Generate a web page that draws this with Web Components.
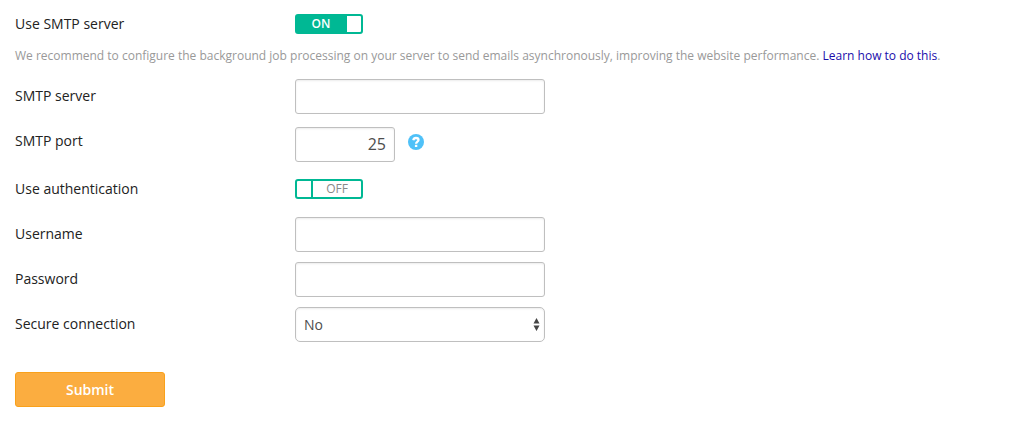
<!DOCTYPE html>
<html lang="en">
<head>
<meta charset="utf-8">
<title>SMTP settings</title>
<style>
  body { margin: 0; padding: 7px 15px 24px; background: #fff; color: #222; font: 14px/20px "Open Sans", sans-serif; }
</style>
</head>
<body>
<smtp-settings>
  <toggle-field label="Use SMTP server" checked></toggle-field>
  <hint-text>We recommend to configure the background job processing on your server to send emails asynchronously, improving the website performance. <hint-link href="#background-jobs">Learn how to do this</hint-link>.</hint-text>
  <text-field label="SMTP server"></text-field>
  <text-field label="SMTP port" value="25" kind="number"><help-button></help-button></text-field>
  <toggle-field label="Use authentication"></toggle-field>
  <text-field label="Username"></text-field>
  <text-field label="Password" type="password"></text-field>
  <select-field label="Secure connection" options="No,SSL,TLS"></select-field>
  <submit-button>Submit</submit-button>
</smtp-settings>

<script>
const rowStyles = `
  :host { display: grid; grid-template-columns: 280px minmax(0, 1fr); align-items: start; }
  * { box-sizing: border-box; }
  .label { line-height: 34px; }
  .control { display: flex; align-items: center; min-height: 35px; }
  .box { width: 100%; max-width: 250px; height: 35px; margin: 0; padding: 0 8px; border: 1px solid #bfbfbf;
    border-radius: 3px; background: #fff; box-shadow: inset 0 1px 2px rgba(0,0,0,.08);
    color: #4d4d4d; font: inherit; }
`;

class BaseElement extends HTMLElement {
  connectedCallback() {
    if (this.shadowRoot) return;
    this.attachShadow({ mode: 'open' }).innerHTML = this.template();
  }
  attr(name, fallback = '') { return this.getAttribute(name) ?? fallback; }
}

customElements.define('smtp-settings', class extends BaseElement {
  template() {
    return `<style>:host { display: block; } form { display: flex; flex-direction: column; gap: 10px; }</style>
      <form><slot></slot></form>`;
  }
});

customElements.define('text-field', class extends BaseElement {
  template() {
    return `<style>${rowStyles}
        .box { padding-bottom: 2px; font-size: 16px; }
        :host([kind="number"]) .control { padding-top: 3px; gap: 13px; }
        :host([kind="number"]) .box { max-width: 100px; text-align: right; }
      </style>
      <label class="label" for="field">${this.attr('label')}</label>
      <div class="control">
        <input class="box" id="field" type="${this.attr('type', 'text')}" value="${this.attr('value')}">
        <slot></slot>
      </div>`;
  }
});

customElements.define('toggle-field', class extends BaseElement {
  template() {
    return `<style>${rowStyles}
        .control { align-items: flex-start; padding-top: 7px; }
        .switch { display: grid; width: 68px; height: 20px; cursor: pointer; }
        input { grid-area: 1 / 1; appearance: none; width: 100%; height: 100%; margin: 0;
          border: 2px solid #00b894; border-radius: 3px;
          background: linear-gradient(#00b894, #00b894) 14px 0 / 2px 100% no-repeat #fff; }
        input:checked { background: linear-gradient(#fff, #fff) 100% 0 / 14px 100% no-repeat #00b894; }
        span { grid-area: 1 / 1; font-size: 12px; line-height: 20px; text-align: center; pointer-events: none; }
        .on { display: none; padding-right: 16px; color: #fff; font-weight: 600; }
        .off { padding-left: 16px; color: #888; }
        input:checked ~ .on { display: block; }
        input:checked ~ .off { display: none; }
      </style>
      <label class="label" for="field">${this.attr('label')}</label>
      <div class="control">
        <div class="switch">
          <input id="field" type="checkbox" ${this.hasAttribute('checked') ? 'checked' : ''}>
          <span class="on">ON</span><span class="off">OFF</span>
        </div>
      </div>`;
  }
});

customElements.define('select-field', class extends BaseElement {
  template() {
    const options = this.attr('options').split(',').map(o => `<option>${o}</option>`).join('');
    return `<style>${rowStyles}
        .picker { display: grid; align-items: center; width: 100%; max-width: 250px; }
        select { grid-area: 1 / 1; }
        select.box { appearance: none; border-radius: 5px; }
        svg { grid-area: 1 / 1; justify-self: end; margin-right: 5px; pointer-events: none; }
      </style>
      <label class="label" for="field">${this.attr('label')}</label>
      <div class="control">
        <div class="picker">
          <select class="box" id="field">${options}</select>
          <svg width="7" height="13" viewBox="0 0 7 13" fill="#444" aria-hidden="true">
            <path d="M3.5 0 6.5 5.5H.5zM3.5 13 .5 7.5h6z"/>
          </svg>
        </div>
      </div>`;
  }
});

customElements.define('hint-text', class extends BaseElement {
  template() {
    return `<style>:host { display: block; margin-top: -10px; color: #999; font-size: 12px; line-height: 27px; }</style><slot></slot>`;
  }
});

customElements.define('hint-link', class extends BaseElement {
  template() {
    return `<style>:host { display: inline; } a { color: #1a0dab; text-decoration: none; }</style><a href="${this.attr('href')}"><slot></slot></a>`;
  }
});

customElements.define('help-button', class extends BaseElement {
  template() {
    return `<style>
        :host { display: block; margin-bottom: 6px; }
        button { display: block; padding: 0; border: 0; background: none; cursor: pointer; }
        svg { display: block; }
      </style>
      <button type="button" aria-label="Help">
        <svg width="16" height="16" viewBox="0 0 16 16" fill="none">
          <circle cx="8" cy="8" r="8" fill="#4fc1f8"/>
          <path d="M5.3 6.2C5.6 4.7 6.600 4 8 4c1.500 0 2.500.8 2.500 2C10.500 7.600 8.100 7.600 8.100 9.700" stroke="#fff" stroke-width="2.3"/>
          <path d="M6.900 10.800h2.400v2.200H6.900z" fill="#fff"/>
        </svg>
      </button>`;
  }
});

customElements.define('submit-button', class extends BaseElement {
  template() {
    return `<style>
        :host { display: block; margin-top: 20px; }
        button { width: 150px; height: 35px; padding: 0; border: 1px solid #f9a11b; border-radius: 3px;
          background: #fbad40; color: #fff; font: inherit; font-weight: 600; cursor: pointer; }
      </style>
      <button type="submit"><slot></slot></button>`;
  }
});
</script>
</body>
</html>
